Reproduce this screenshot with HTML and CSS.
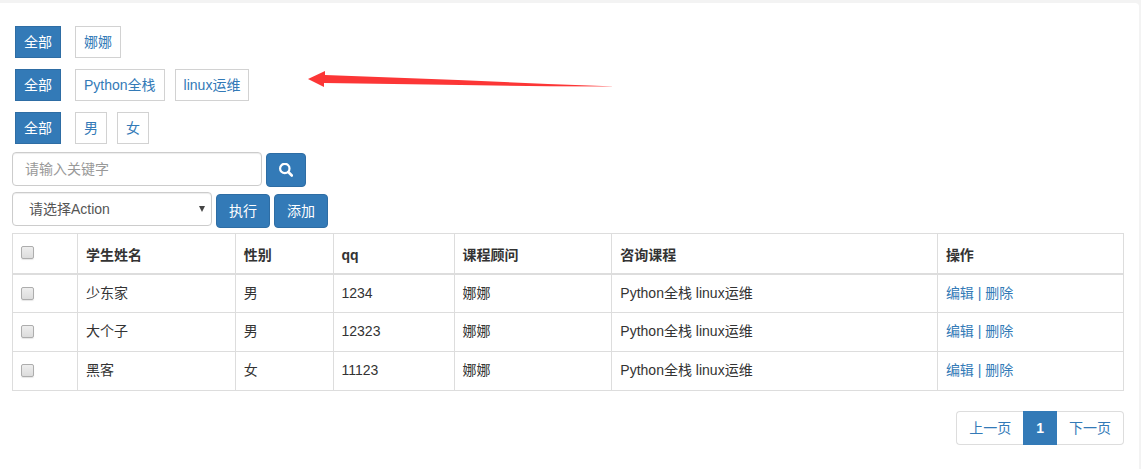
FILE: index.html
```html
<!DOCTYPE html>
<html lang="zh-CN">
<head>
    <meta charset="UTF-8">
    <meta name="viewport" content="width=device-width, initial-scale=1.0">
    <title>学生列表</title>
    <link rel="stylesheet" href="styles.css">
</head>
<body>
    <div class="panel">
        <!-- Filters -->
        <div class="filters">
            <div class="filter-row">
                <a href="#" class="tag all active">全部</a>
                <a href="#" class="tag">娜娜</a>
            </div>
            <div class="filter-row">
                <a href="#" class="tag all active">全部</a>
                <a href="#" class="tag">Python全栈</a>
                <a href="#" class="tag">linux运维</a>
                <svg class="arrow" viewBox="0 0 308 18" aria-hidden="true">
                    <path d="M0 8 L17 0 L17 4 L150 9 L240 13 L308 15.500 L240 15.200 L120 13.500 L16 12 L16 16 Z" fill="#fc3636"/>
                </svg>
            </div>
            <div class="filter-row">
                <a href="#" class="tag all active">全部</a>
                <a href="#" class="tag">男</a>
                <a href="#" class="tag">女</a>
            </div>
        </div>

        <!-- Search -->
        <form class="toolbar">
            <input type="text" class="form-control search" placeholder="请输入关键字" aria-label="请输入关键字">
            <button type="submit" class="btn" aria-label="搜索">
                <svg class="icon" viewBox="0 0 14 14" aria-hidden="true">
                    <circle cx="5.800" cy="5.500" r="4.700" fill="none" stroke="#fff" stroke-width="2.200"/>
                    <path d="M9.300 9 L12.800 12.500" stroke="#fff" stroke-width="2.600" stroke-linecap="round"/>
                </svg>
            </button>
        </form>

        <!-- Batch actions -->
        <form class="toolbar actions">
            <div class="select-wrap">
                <select class="form-control" aria-label="请选择Action">
                    <option>请选择Action</option>
                </select>
                <svg class="caret" viewBox="0 0 6 6" aria-hidden="true">
                    <path d="M0 0 H6 L3 6 Z" fill="#444"/>
                </svg>
            </div>
            <button type="submit" class="btn">执行</button>
            <button type="button" class="btn">添加</button>
        </form>

        <table class="table">
            <colgroup>
                <col class="col-check">
                <col class="col-name">
                <col class="col-gender">
                <col class="col-qq">
                <col class="col-name">
                <col class="col-course">
                <col>
            </colgroup>
            <thead>
                <tr>
                    <th class="check"><input type="checkbox" aria-label="全选"></th>
                    <th>学生姓名</th>
                    <th>性别</th>
                    <th>qq</th>
                    <th>课程顾问</th>
                    <th>咨询课程</th>
                    <th>操作</th>
                </tr>
            </thead>
            <tbody>
                <tr>
                    <td class="check"><input type="checkbox" aria-label="少东家"></td>
                    <td>少东家</td>
                    <td>男</td>
                    <td>1234</td>
                    <td>娜娜</td>
                    <td>Python全栈 linux运维</td>
                    <td class="ops"><a href="#">编辑</a> | <a href="#">删除</a></td>
                </tr>
                <tr>
                    <td class="check"><input type="checkbox" aria-label="大个子"></td>
                    <td>大个子</td>
                    <td>男</td>
                    <td>12323</td>
                    <td>娜娜</td>
                    <td>Python全栈 linux运维</td>
                    <td class="ops"><a href="#">编辑</a> | <a href="#">删除</a></td>
                </tr>
                <tr>
                    <td class="check"><input type="checkbox" aria-label="黑客"></td>
                    <td>黑客</td>
                    <td>女</td>
                    <td>11123</td>
                    <td>娜娜</td>
                    <td>Python全栈 linux运维</td>
                    <td class="ops"><a href="#">编辑</a> | <a href="#">删除</a></td>
                </tr>
            </tbody>
        </table>

        <!-- Pagination -->
        <nav class="pagination">
            <a href="#">上一页</a>
            <a href="#" class="current">1</a>
            <a href="#">下一页</a>
        </nav>
    </div>
</body>
</html>
```
FILE: styles.css
```css
* {
    box-sizing: border-box;
}

body {
    margin: 0;
    padding: 3px 2px 0 0;
    min-height: 100vh;
    display: flex;
    background: #f3f3f3;
    font-family: "Liberation Sans", "Noto Sans CJK SC", sans-serif;
    font-size: 14px;
    line-height: 20px;
    color: #333;
}

a {
    color: #337ab7;
    text-decoration: none;
}

.panel {
    flex: 1;
    padding: 23px 15px 24px 12px;
    background: #fff;
    border-top-right-radius: 4px;
}

/* Filters */
.filters {
    display: flex;
    flex-direction: column;
    gap: 11px;
    padding-left: 3px;
    margin-bottom: 8px;
}

.filter-row {
    display: flex;
    gap: 10px;
    position: relative;
}

.tag {
    padding: 5px 8px;
    border: 1px solid #d2d2d2;
}

.tag.all {
    margin-right: 4px;
}

.tag.active {
    background: #337ab7;
    border-color: #2e6da4;
    color: #fff;
}

.arrow {
    position: absolute;
    left: 293px;
    top: 2px;
    width: 308px;
    height: 18px;
}

/* Forms */
.toolbar {
    display: flex;
    align-items: flex-start;
    gap: 4px;
}

.toolbar .btn {
    margin-top: 1px;
}

.toolbar.actions {
    margin: 5px 0;
}

.toolbar.actions .btn {
    margin-top: 2px;
}

.form-control {
    display: block;
    height: 34px;
    padding: 6px 12px;
    border: 1px solid #ccc;
    border-radius: 4px;
    background: #fff;
    box-shadow: inset 0 1px 1px rgba(0, 0, 0, 0.075);
    font: inherit;
    color: #555;
}

.form-control::placeholder {
    color: #999;
}

.search {
    width: 250px;
}

.select-wrap {
    position: relative;
    width: 200px;
}

.select-wrap .form-control {
    width: 100%;
    padding: 6px 16px;
    appearance: none;
}

.caret {
    position: absolute;
    right: 7px;
    top: 14px;
    width: 6px;
    height: 6px;
    pointer-events: none;
}

.btn {
    height: 34px;
    padding: 6px 12px;
    border: 1px solid #2e6da4;
    border-radius: 4px;
    background: #337ab7;
    font: inherit;
    color: #fff;
    cursor: pointer;
}

.icon {
    display: block;
    width: 14px;
    height: 14px;
}

/* Table */
.table {
    width: 100%;
    table-layout: fixed;
    border-collapse: collapse;
}

.table th,
.table td {
    height: 39px;
    padding: 8px;
    border: 1px solid #ddd;
    text-align: left;
    vertical-align: top;
}

.table thead th {
    height: 40px;
    border-bottom-width: 2px;
    vertical-align: bottom;
}

.table thead .check {
    vertical-align: top;
}

.ops {
    color: #337ab7;
}

.col-check {
    width: 65px;
}

.col-name {
    width: 14.2%;
}

.col-gender {
    width: 8.8%;
}

.col-qq {
    width: 10.9%;
}

.col-course {
    width: 29.3%;
}

input[type="checkbox"] {
    display: block;
    width: 13px;
    height: 13px;
    margin: 4px 0 0;
    appearance: none;
    border: 1px solid #adadad;
    border-radius: 2px;
    background: linear-gradient(#eee, #dcdcdc);
    box-shadow: 0 1px 1px rgba(0, 0, 0, 0.1);
}

input[type="checkbox"]:checked {
    background: #337ab7;
}

/* Pagination */
.pagination {
    display: flex;
    justify-content: flex-end;
    margin-top: 20px;
}

.pagination a {
    padding: 6px 12px;
    border: 1px solid #ddd;
}

.pagination a:first-child {
    border-right: 0;
    border-radius: 4px 0 0 4px;
}

.pagination a:last-child {
    border-left: 0;
    border-radius: 0 4px 4px 0;
}

.pagination .current {
    background: #337ab7;
    border-color: #337ab7;
    color: #fff;
    font-weight: bold;
}
```
